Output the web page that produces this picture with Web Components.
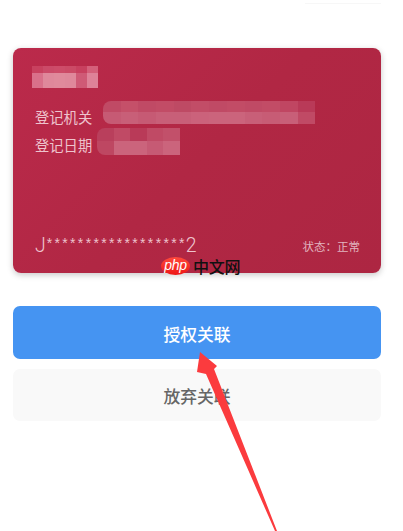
<!DOCTYPE html>
<html>
<head>
<meta charset="utf-8">
<style>
  html, body { margin: 0; background: #fff; }
  body { font-family: "Liberation Sans", "Noto Sans CJK SC", sans-serif; }
</style>
</head>
<body>
<auth-page>
  <id-card slot="card">
    <mosaic-block slot="name" cols="6" cell="11" rowh="7,15" colors="c8415f,cb4a68,cd4c69,cb4a66,c8405f,d4607a,d9708a,df889b,e08a9c,df889b,cf5a76,de8298"></mosaic-block>
    <card-row slot="rows" label="登记机关">
      <mosaic-block cols="12" cell="17.7" rowh="11,12" radius="8" colors="c04a65,c55069,c04a65,c24c66,be4a64,c24d67,c04a65,c24c66,c04a65,c24c66,c04662,b93a58,c65a74,c85f78,c65a74,c85f78,c85f78,cb627b,cb647c,cb647c,c85f78,c75c75,c85f78,c04a65"></mosaic-block>
    </card-row>
    <card-row slot="rows" label="登记日期" class="short">
      <mosaic-block style="margin-left:-6px" cols="5" cell="16.6" rowh="13,14" radius="8" colors="b93f5c,c04a65,b93a58,c04a65,c2506a,be4762,cb647c,cb647c,c65a74,cb647c"></mosaic-block>
    </card-row>
    <masked-number slot="number" first="J" stars="******************" last="2"></masked-number>
    <span slot="status">状态：正常</span>
  </id-card>
  <action-button slot="actions" kind="primary">授权关联</action-button>
  <action-button slot="actions">放弃关联</action-button>
</auth-page>

<script>
class AuthPage extends HTMLElement {
  constructor() {
    super();
    this.attachShadow({mode: 'open'}).innerHTML = `
      <style>
        :host { display: block; position: relative; width: 403px; height: 531px; overflow: hidden; box-sizing: border-box; padding: 48px 22px 0 13px; background: #fff; }
        .top { position: absolute; left: 305px; top: 3px; width: 76px; height: 1px; background: #f7f7f7; }
        .actions { display: flex; flex-direction: column; gap: 10px; margin-top: 33px; }
        .mark { position: absolute; left: 161px; top: 257px; display: flex; align-items: center; }
        .php { width: 29px; height: 18px; border-radius: 50%; background: linear-gradient(#ff4a3c, #ee1616); color: #fff; font: italic 14px/16px "Liberation Sans", sans-serif; text-align: center; letter-spacing: -.3px; }
        .cn { margin-left: 3px; font: 500 16px/18px "Noto Sans CJK SC", sans-serif; color: #111; letter-spacing: -.3px; }
        svg { position: absolute; left: 0; top: 0; }
      </style>
      <div class="top"></div>
      <slot name="card"></slot>
      <div class="actions"><slot name="actions"></slot></div>
      <div class="mark"><span class="php">php</span><span class="cn">中文网</span></div>
      <svg width="403" height="531" viewBox="0 0 403 531">
        <polygon fill="#fb3b3e" points="200,352 217,366 214,369 277,531 275,531 206,374 197,372"/>
      </svg>`;
  }
}

class IdCard extends HTMLElement {
  constructor() {
    super();
    this.attachShadow({mode: 'open'}).innerHTML = `
      <style>
        :host { display: flex; flex-direction: column; box-sizing: border-box; height: 225px; padding: 18px 21px 17px 19px; border-radius: 8px; color: #eec3cd;
          background: linear-gradient(135deg, #bb2a4b 0%, #b12744 50%, #ad2642 100%);
          box-shadow: 0 2px 6px rgba(0,0,0,.22); }
        .rows { display: flex; flex-direction: column; gap: 4px; margin-top: 13px; }
        .foot { display: flex; justify-content: space-between; align-items: center; margin-top: auto; padding-left: 3px; }
        .status { font: 11.5px/20px "Noto Sans CJK SC", sans-serif; color: #e2b4bf; }
      </style>
      <slot name="name"></slot>
      <div class="rows"><slot name="rows"></slot></div>
      <div class="foot">
        <slot name="number"></slot>
        <span class="status"><slot name="status"></slot></span>
      </div>`;
  }
}

class MaskedNumber extends HTMLElement {
  constructor() {
    super();
    this.attachShadow({mode: 'open'}).innerHTML = `
      <style>
        :host { display: flex; align-items: flex-start; font: 300 19.5px/20px Roboto, sans-serif; color: #eec3cd; }
        .stars { font: 14px/14px "Liberation Sans", sans-serif; letter-spacing: 2.33px; margin: 0 -1px 0 1px; }
      </style>
      <span>${this.getAttribute('first')}</span><span class="stars">${this.getAttribute('stars')}</span><span>${this.getAttribute('last')}</span>`;
  }
}

class CardRow extends HTMLElement {
  constructor() {
    super();
    this.attachShadow({mode: 'open'}).innerHTML = `
      <style>
        :host { display: flex; align-items: flex-start; gap: 10px; padding-left: 3px; }
        :host(.short) .label { margin-top: 10px; }
        .label { margin-top: 9px; font: 14.3px/14px "Noto Sans CJK SC", sans-serif; color: #eec3cd; width: 58px; white-space: nowrap; }
      </style>
      <span class="label">${this.getAttribute('label')}</span>
      <slot></slot>`;
  }
}

class MosaicBlock extends HTMLElement {
  constructor() {
    super();
    const cols = +this.getAttribute('cols');
    const cell = +this.getAttribute('cell');
    const rowh = this.getAttribute('rowh').split(',').map(h => h + 'px').join(' ');
    const radius = this.getAttribute('radius') || 0;
    const cells = this.getAttribute('colors').split(',').map(c => `<i style="background:#${c}"></i>`).join('');
    this.attachShadow({mode: 'open'}).innerHTML = `
      <style>
        :host { display: block; width: max-content; }
        .grid { display: grid; grid-template-columns: repeat(${cols}, ${cell}px); grid-template-rows: ${rowh}; border-radius: ${radius}px 0 0 ${radius}px; overflow: hidden; filter: blur(.5px); }
      </style>
      <div class="grid">${cells}</div>`;
  }
}

class ActionButton extends HTMLElement {
  constructor() {
    super();
    this.attachShadow({mode: 'open'}).innerHTML = `
      <style>
        :host { display: flex; align-items: center; justify-content: center; box-sizing: border-box; height: 52px; padding-top: 2px; border-radius: 7px; background: #f9f9f9; color: #666; font: 500 16.8px/24px "Noto Sans CJK SC", sans-serif; }
        :host([kind="primary"]) { height: 53px; background: #4594f2; color: #fff; }
      </style>
      <slot></slot>`;
  }
}

customElements.define('auth-page', AuthPage);
customElements.define('id-card', IdCard);
customElements.define('masked-number', MaskedNumber);
customElements.define('card-row', CardRow);
customElements.define('mosaic-block', MosaicBlock);
customElements.define('action-button', ActionButton);
</script>
</body>
</html>
